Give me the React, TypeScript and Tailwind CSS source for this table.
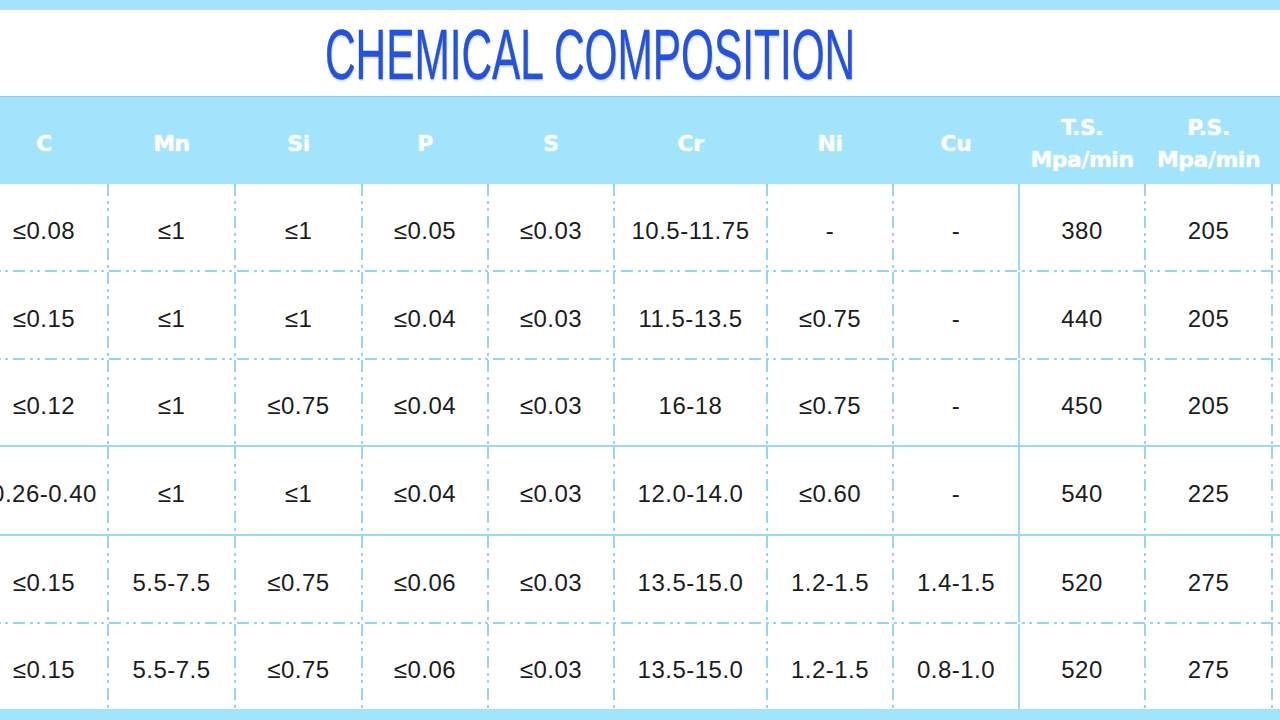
const headers: Array<string[]> = [
  ["C"],
  ["Mn"],
  ["Si"],
  ["P"],
  ["S"],
  ["Cr"],
  ["Ni"],
  ["Cu"],
  ["T.S.", "Mpa/min"],
  ["P.S.", "Mpa/min"],
  [],
];

const rows: string[][] = [
  ["≤0.08", "≤1", "≤1", "≤0.05", "≤0.03", "10.5-11.75", "-", "-", "380", "205"],
  ["≤0.15", "≤1", "≤1", "≤0.04", "≤0.03", "11.5-13.5", "≤0.75", "-", "440", "205"],
  ["≤0.12", "≤1", "≤0.75", "≤0.04", "≤0.03", "16-18", "≤0.75", "-", "450", "205"],
  ["0.26-0.40", "≤1", "≤1", "≤0.04", "≤0.03", "12.0-14.0", "≤0.60", "-", "540", "225"],
  ["≤0.15", "5.5-7.5", "≤0.75", "≤0.06", "≤0.03", "13.5-15.0", "1.2-1.5", "1.4-1.5", "520", "275"],
  ["≤0.15", "5.5-7.5", "≤0.75", "≤0.06", "≤0.03", "13.5-15.0", "1.2-1.5", "0.8-1.0", "520", "275"],
];

// content heights of the body rows (the 2px rule below each is extra)
const rowHeights = ["h-[86px]", "h-[86px]", "h-[85px]", "h-[87px]", "h-[86px]", "h-[85px]"];
// rule under each row: dashed, solid or none
const rowRules: Array<"dash" | "solid" | null> = ["dash", "dash", "solid", "solid", "dash", null];

const cellWidths = [
  "w-[126px]",
  "w-[125px]",
  "w-[125px]",
  "w-[124px]",
  "w-[124px]",
  "w-[151px]",
  "w-[124px]",
  "w-[124px]",
  "w-[124px]",
  "w-[125px]",
  "flex-1",
];

const hDash =
  "bg-[repeating-linear-gradient(90deg,#97d4f1_0_12px,transparent_12px_17px,#97d4f1_17px_20px,transparent_20px_24px,#97d4f1_24px_27px,transparent_27px_32px)]";
const vDash =
  "bg-[repeating-linear-gradient(180deg,#97d4f1_0_12px,transparent_12px_17px,#97d4f1_17px_20px,transparent_20px_24px,#97d4f1_24px_27px,transparent_27px_32px)]";

function VRule({ solid }: { solid: boolean }) {
  return <div className={`w-[2px] shrink-0 ${solid ? "bg-[#9ad8f4]" : vDash}`} />;
}

function HeaderRow() {
  return (
    <div className="flex h-[88px] bg-[#a2e4fb] border-t border-[#8cc9e2]">
      {headers.map((lines, i) => (
        <div key={i} className="contents">
          <div
            className={`${cellWidths[i]} shrink-0 flex flex-col items-center justify-center pt-[6px] text-white font-bold text-[22px] leading-[32px] tracking-[-0.5px] [text-shadow:0_0_2px_rgba(255,255,255,0.6)]`}
          >
            {lines.map((l) => (
              <span key={l}>{l}</span>
            ))}
          </div>
          {i < 10 && <div className="w-[2px] shrink-0" />}
        </div>
      ))}
    </div>
  );
}

function BodyRow({ values, idx }: { values: string[]; idx: number }) {
  const rule = rowRules[idx];
  return (
    <>
      <div className={`flex ${rowHeights[idx]}`}>
        {[...values, ""].map((v, i) => (
          <div key={i} className="contents">
            <div
              className={`${cellWidths[i]} shrink-0 flex items-center justify-center pt-[7px] text-[24px] tracking-[0.5px] text-[#1c1c1c]`}
            >
              {v}
            </div>
            {i < 10 && <VRule solid={i === 7} />}
          </div>
        ))}
      </div>
      {rule && <div className={`h-[2px] ${rule === "solid" ? "bg-[#9ad8f4]" : hDash}`} />}
    </>
  );
}

export default function App() {
  return (
    <div className="w-[1280px] h-[720px] overflow-hidden bg-white flex flex-col font-['Liberation_Sans',Arial,sans-serif]">
      <div className="h-[10px] bg-[#a2e4fb] border-b border-[#b8dcec]" />

      {/* Title */}
      <div className="h-[86px] flex items-center pl-[325px] pt-[4px]">
        <h1 className="origin-left scale-x-[0.605] whitespace-nowrap text-[70px] leading-none font-normal text-[#2152e4] [text-shadow:1px_2px_2px_rgba(60,80,140,0.2)] [-webkit-text-stroke:0.4px_#2152e4]">
          CHEMICAL COMPOSITION
        </h1>
      </div>

      {/* Table */}
      <div className="ml-[-19px] w-[1320px] flex flex-col">
        <div className="font-['DejaVu_Sans',Verdana,sans-serif]">
          <HeaderRow />
        </div>
        {rows.map((r, i) => (
          <BodyRow key={i} values={r} idx={i} />
        ))}
      </div>

      <div className="flex-1 bg-[#a2e4fb]" />
    </div>
  );
}
